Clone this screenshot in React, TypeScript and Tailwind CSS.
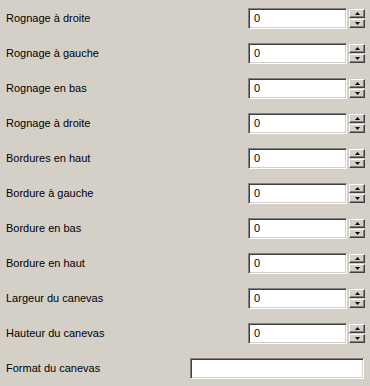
import type { ReactNode } from 'react';

const FONT = "font-['Tahoma','Liberation_Sans',sans-serif]";

const rows = [
  'Rognage à droite',
  'Rognage à gauche',
  'Rognage en bas',
  'Rognage à droite',
  'Bordures en haut',
  'Bordure à gauche',
  'Bordure en bas',
  'Bordure en haut',
  'Largeur du canevas',
  'Hauteur du canevas',
];

function Sunken({ className, children }: { className: string; children?: ReactNode }) {
  return (
    <div
      className={`${className} h-[21px] bg-white border border-t-[#808080] border-l-[#808080] border-r-white border-b-white shadow-[inset_1px_1px_0_#404040,inset_-1px_-1px_0_#d4d0c8] flex items-center pl-[5px] text-[11px] text-black`}
    >
      {children}
    </div>
  );
}

function SpinButton({ up }: { up?: boolean }) {
  return (
    <div className="w-[16px] h-[9px] bg-[#d4d0c8] border border-t-white border-l-white border-r-[#404040] border-b-[#404040] shadow-[inset_-1px_-1px_0_#808080] flex items-center justify-center">
      <svg width="5" height="3" viewBox="0 0 5 3" className="block">
        {up ? (
          <polygon points="2.5,0 5,3 0,3" fill="#000" />
        ) : (
          <polygon points="0,0 5,0 2.5,3" fill="#000" />
        )}
      </svg>
    </div>
  );
}

export default function App() {
  return (
    <div className={`w-[370px] h-[386px] bg-[#d4d0c8] pt-[8px] pl-[6px] pr-[5px] flex flex-col gap-[14px] ${FONT}`}>
      {rows.map((label, idx) => (
        <div key={`${label}-${idx}`} className="flex items-center h-[21px]">
          <span className="flex-1 text-[11px] text-[#000] leading-none">{label}</span>
          <Sunken className="w-[99px]">0</Sunken>
          <div className="ml-[2px] flex flex-col gap-[1px] pt-[1px] self-start">
            <SpinButton up />
            <SpinButton />
          </div>
        </div>
      ))}

      {/* Format row */}
      <div className="flex items-center h-[21px]">
        <span className="flex-1 text-[11px] text-[#000] leading-none">Format du canevas</span>
        <Sunken className="w-[174px] mr-[1px]" />
      </div>
    </div>
  );
}
